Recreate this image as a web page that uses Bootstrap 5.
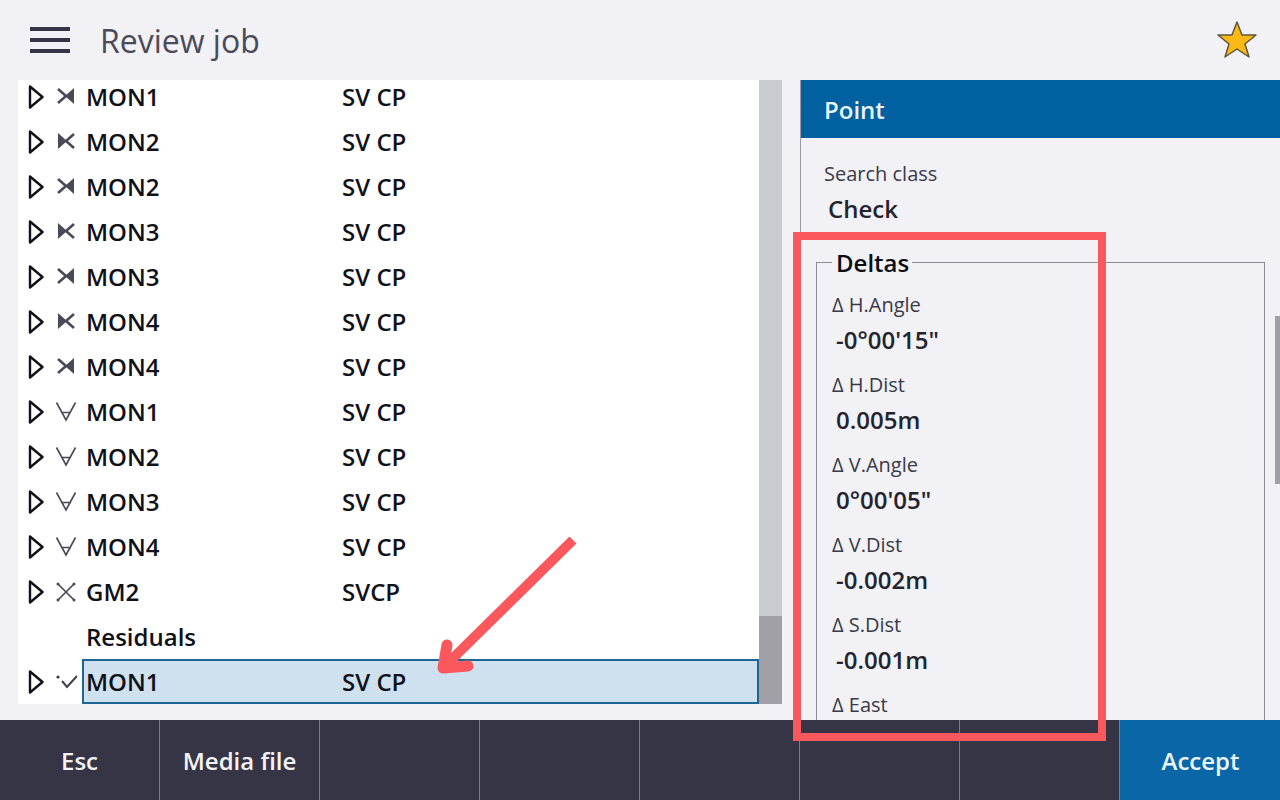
<!DOCTYPE html>
<html lang="en">
<head>
    <meta charset="UTF-8">
    <meta name="viewport" content="width=device-width, initial-scale=1.0">
    <title>Review job</title>
    <link href="https://cdn.jsdelivr.net/npm/bootstrap@5.3.0/dist/css/bootstrap.min.css" rel="stylesheet">
    <style>
        html, body { height: 100%; }
        body { width: 1280px; height: 800px; overflow: hidden; background: #f1f1f6; font-family: "Open Sans", sans-serif; color: #1f1f2b; position: relative; }
        .top-bar { height: 80px; padding: 0 22px 0 30px; }
        .burger { width: 40px; height: 26px; }
        .burger span { display: block; height: 4px; background: #363545; }
        .page-title { font-size: 32px; color: #4b4a58; margin-left: 30px; line-height: 1; padding-top: 1px; }
        .main-area { height: 640px; }
        .list-side { width: 800px; padding: 0 18px 16px 18px; }
        .list-box { background: #fff; overflow: hidden; }
        .job-rows { margin-top: -6px; }
        .job-row { height: 45px; font-size: 24px; font-weight: 600; color: #111119; }
        .expander { width: 64px; padding-left: 10px; flex: none; gap: 11px; }
        .row-name { width: 256px; flex: none; }
        .picked-cell { height: 45px; width: 677px; background: #cfe0ef; border: 2px solid #1d6595; padding-left: 2px; }
        .list-scroll { width: 23px; background: #cbccd1; flex: none; }
        .list-thumb { width: 100%; height: 88px; background: #a0a0a6; }
        .detail-side { flex: 1; border-left: 1px solid #9c9ca4; position: relative; overflow: hidden; }
        .detail-head { height: 58px; background: #0060a0; color: #e8f4fb; font-size: 24px; font-weight: 600; padding: 1px 0 0 23px; }
        .detail-body { padding: 21px 15px 0 15px; }
        .field-label { font-size: 20px; line-height: 30px; color: #3a3a47; padding-left: 8px; }
        .field-value { font-size: 24px; font-weight: 600; line-height: 40px; color: #24242f; padding-left: 12px; }
        .delta-box { border: 1px solid #8d8d95; border-bottom: 0; margin: 16px 0 0 0; padding: 0 15px; height: 600px; min-width: 0; }
        .delta-box legend { float: none; width: auto; font-size: 24px; font-weight: 600; line-height: 32px; color: #0d0d14; margin: 0; padding: 2px 3px 0 4px; }
        .delta-item { height: 80px; }
        .delta-item .field-label { padding-left: 0; }
        .delta-item .field-value { padding-left: 4px; }
        .delta-list { margin-top: 11px; }
        .detail-thumb { position: absolute; right: 0; top: 236px; width: 5px; height: 168px; background: #a0a0a6; }
        .bottom-bar { height: 80px; background: #363545; }
        .soft-key { width: 160px; border-right: 1px solid #7a7a85; color: #f4f4f8; font-size: 24px; font-weight: 600; padding-top: 1px; }
        .soft-key.accept { background: #0a66a6; border-right: 0; color: #eaf5fb; padding-left: 1px; }
        .red-box { position: absolute; left: 793px; top: 232px; width: 313px; height: 509px; border: 8px solid #fb585d; pointer-events: none; }
        .red-arrow { position: absolute; left: 430px; top: 530px; width: 160px; height: 150px; pointer-events: none; }
    </style>
</head>
<body>
    <div class="top-bar d-flex align-items-center">
        <div class="burger d-flex flex-column justify-content-between"><span></span><span></span><span></span></div>
        <div class="page-title">Review job</div>
        <svg class="ms-auto" width="42" height="42" viewBox="0 0 42 42"><path d="M21 3 L26 16 L40 16 L29 25 L33 38 L21 30 L9 38 L13 25 L2 16 L16 16 Z" fill="#fdb813" stroke="#5c5640" stroke-width="1.5" stroke-linejoin="round"/></svg>
    </div>

    <div class="main-area d-flex">
        <div class="list-side d-flex">
            <div class="list-box flex-grow-1">
                <div class="job-rows" id="jobRows"></div>
            </div>
            <div class="list-scroll d-flex flex-column justify-content-end"><div class="list-thumb"></div></div>
        </div>
        <div class="detail-side">
            <div class="detail-head d-flex align-items-center">Point</div>
            <div class="detail-body">
                <div class="field-label">Search class</div>
                <div class="field-value">Check</div>
                <fieldset class="delta-box">
                    <legend>Deltas</legend>
                    <div class="delta-list" id="deltaList"></div>
                </fieldset>
            </div>
            <div class="detail-thumb"></div>
        </div>
    </div>

    <div class="bottom-bar d-flex">
        <div class="soft-key d-flex align-items-center justify-content-center">Esc</div>
        <div class="soft-key d-flex align-items-center justify-content-center">Media file</div>
        <div class="soft-key"></div>
        <div class="soft-key"></div>
        <div class="soft-key"></div>
        <div class="soft-key"></div>
        <div class="soft-key"></div>
        <div class="soft-key accept d-flex align-items-center justify-content-center">Accept</div>
    </div>

    <div class="red-box"></div>
    <svg class="red-arrow" viewBox="0 0 160 150">
        <path d="M143 10 L16 135" stroke="#fb585d" stroke-width="10" fill="none"/>
        <path d="M17 115 L13 138 L38 136" stroke="#fb585d" stroke-width="11" fill="none" stroke-linecap="round" stroke-linejoin="round"/>
    </svg>

    <script>
        // icon for each observation type
        const icons = {
            left: '<path d="M3 3 L11 10 L3 17" stroke="#4a4957" stroke-width="2.6" fill="none"/><path d="M19 2 L19 18 L10 10 Z" fill="#4a4957"/>',
            right: '<path d="M19 3 L11 10 L19 17" stroke="#4a4957" stroke-width="2.6" fill="none"/><path d="M3 2 L3 18 L12 10 Z" fill="#4a4957"/>',
            fork: '<path d="M1.5 1.5 L11 19 L20.5 1.5 M6 11.5 L16 11.5" stroke="#4a4957" stroke-width="1.6" fill="none"/>',
            cross: '<path d="M3 3 L19 19 M19 3 L3 19" stroke="#4a4957" stroke-width="1.7" fill="none"/><circle cx="3" cy="3" r="1.5" fill="#4a4957"/><circle cx="19" cy="3" r="1.5" fill="#4a4957"/><circle cx="3" cy="19" r="1.5" fill="#4a4957"/><circle cx="19" cy="19" r="1.5" fill="#4a4957"/>',
            check: '<path d="M7 10 L12 16 L22 5" stroke="#3f3e4c" stroke-width="2" fill="none"/><circle cx="3" cy="6" r="1.6" fill="#363545"/>'
        };
        const rows = [
            ['left', 'MON1', 'SV CP'], ['right', 'MON2', 'SV CP'], ['left', 'MON2', 'SV CP'],
            ['right', 'MON3', 'SV CP'], ['left', 'MON3', 'SV CP'], ['right', 'MON4', 'SV CP'],
            ['left', 'MON4', 'SV CP'], ['fork', 'MON1', 'SV CP'], ['fork', 'MON2', 'SV CP'],
            ['fork', 'MON3', 'SV CP'], ['fork', 'MON4', 'SV CP'], ['cross', 'GM2', 'SVCP'],
            [null, 'Residuals', ''], ['check', 'MON1', 'SV CP']
        ];
        const triangle = '<svg class="flex-shrink-0" width="16" height="24" viewBox="0 0 16 24"><path d="M2 1.5 L14.5 12 L2 22.5 Z" fill="none" stroke="#111119" stroke-width="2.4" stroke-linejoin="round"/></svg>';
        document.getElementById('jobRows').innerHTML = rows.map((r, i) => {
            const start = r[0]
                ? '<div class="expander d-flex align-items-center">' + triangle + '<svg class="flex-shrink-0" width="22" height="22" viewBox="0 0 22 22">' + icons[r[0]] + '</svg></div>'
                : '<div class="expander"></div>';
            const cells = '<div class="row-name">' + r[1] + '</div><div>' + r[2] + '</div>';
            if (i === rows.length - 1) {
                return '<div class="job-row d-flex align-items-center">' + start + '<div class="picked-cell d-flex align-items-center">' + cells + '</div></div>';
            }
            return '<div class="job-row d-flex align-items-center">' + start + '<div class="row-name ms-1">' + r[1] + '</div><div>' + r[2] + '</div></div>';
        }).join('');

        const deltas = [['H.Angle', "-0°00'15\""], ['H.Dist', '0.005m'], ['V.Angle', "0°00'05\""], ['V.Dist', '-0.002m'], ['S.Dist', '-0.001m'], ['East', '']];
        document.getElementById('deltaList').innerHTML = deltas.map(d =>
            '<div class="delta-item"><div class="field-label">Δ ' + d[0] + '</div><div class="field-value">' + d[1] + '</div></div>'
        ).join('');
    </script>
    <script src="https://cdn.jsdelivr.net/npm/bootstrap@5.3.0/dist/js/bootstrap.bundle.min.js"></script>
</body>
</html>
